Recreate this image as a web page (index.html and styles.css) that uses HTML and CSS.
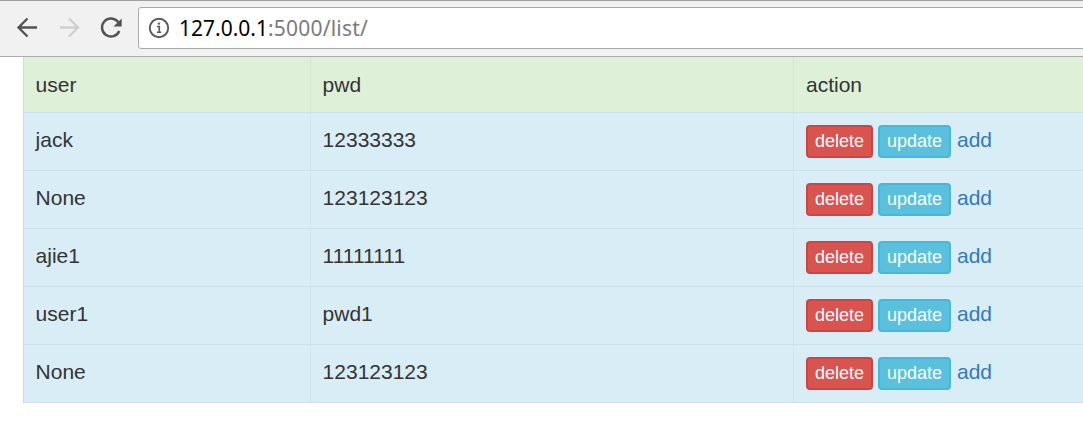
FILE: index.html
```html
<!DOCTYPE html>
<html lang="en">
<head>
<meta charset="utf-8">
<title>list</title>
<link rel="stylesheet" href="styles.css">
</head>
<body>
<header class="toolbar">
  <svg class="nav" width="138" height="54" viewBox="0 2 138 54" fill="none" stroke-width="2.3">
    <path d="M37 27.500H19M27.500 18.500L18.500 27.500L27.500 36.500" stroke="#525254"/>
    <path d="M60 27.500H77.500M69 18.500L78 27.500L69 36.500" stroke="#cfcfcf"/>
    <path d="M118.300 22.200A9 9 0 1 0 119.300 31" stroke="#525254" stroke-width="2.400"/>
    <path d="M121.700 18.500V26.500H113.500Z" fill="#525254"/>
  </svg>
  <div class="address">
    <svg class="info" width="22" height="22" viewBox="0 0 22 22" fill="none">
      <circle cx="11" cy="11" r="9.200" stroke="#58585a" stroke-width="1.900"/>
      <path d="M9 9.500H11.300V15M9 15.200H13.200" stroke="#58585a" stroke-width="1.600"/>
      <circle cx="10.900" cy="6.600" r="1.200" fill="#58585a"/>
    </svg>
    <span class="url">127.0.0.1<span class="path">:5000/list/</span></span>
  </div>
</header>
<table class="users">
  <thead>
    <tr><td class="user">user</td><td class="pwd">pwd</td><td>action</td></tr>
  </thead>
  <tbody>
    <tr><td>jack</td><td>12333333</td><td><div class="actions"><a class="btn delete">delete</a><a class="btn update">update</a><a class="add">add</a></div></td></tr>
    <tr><td>None</td><td>123123123</td><td><div class="actions"><a class="btn delete">delete</a><a class="btn update">update</a><a class="add">add</a></div></td></tr>
    <tr><td>ajie1</td><td>11111111</td><td><div class="actions"><a class="btn delete">delete</a><a class="btn update">update</a><a class="add">add</a></div></td></tr>
    <tr><td>user1</td><td>pwd1</td><td><div class="actions"><a class="btn delete">delete</a><a class="btn update">update</a><a class="add">add</a></div></td></tr>
    <tr><td>None</td><td>123123123</td><td><div class="actions"><a class="btn delete">delete</a><a class="btn update">update</a><a class="add">add</a></div></td></tr>
  </tbody>
</table>
</body>
</html>
```
FILE: styles.css
```css
* { box-sizing: border-box; }
body {
  margin: 0;
  overflow: hidden;
  background: #fff;
  color: #333;
  font: 21px/30px "Liberation Sans", Arial, sans-serif;
}
.toolbar {
  display: flex;
  height: 57px;
  border-top: 1px solid #a0a0a0;
  border-bottom: 1px solid #acacac;
  background: #f1f1f1;
}
.nav { flex: none; margin-top: 1px; }
.address {
  display: flex;
  flex: 1;
  align-items: center;
  height: 42px;
  margin: 6px -4px 0 0;
  padding-left: 9px;
  border: 1px solid #aaa;
  border-radius: 3px;
  background: #fff;
}
.info { flex: none; margin-right: 9px; }
.url {
  color: #000;
  font: 21px/30px "Noto Sans", sans-serif;
}
.path {
  color: #7b7b7b;
  letter-spacing: 0.2px;
}
.users {
  width: 1061px;
  margin-left: 23px;
  border-left: 1px solid #cbdde0;
  border-spacing: 0;
  table-layout: fixed;
}
.user { width: 287px; }
.pwd { width: 483px; }
.users td {
  height: 58px;
  padding: 12px;
  border-right: 1px solid #d0e6ea;
  border-bottom: 1px solid #cde1e8;
  background: #d9edf7;
  vertical-align: top;
}
.users td:not(:last-child) { padding-left: 11.6px; }
.users thead td {
  height: 56px;
  padding-top: 13px;
  background: #dff0d8;
  border-right-color: #d5e6d2;
}
.actions { display: flex; height: 33px; }
.btn {
  height: 33px;
  border: 2px solid;
  border-radius: 4px;
  color: #fff;
  font-size: 18px;
  line-height: 29px;
  text-align: center;
}
.delete {
  width: 67px;
  margin-right: 5px;
  background: #d9534f;
  border-color: #cc4542;
}
.update {
  width: 73px;
  margin-right: 6px;
  background: #5bc0de;
  border-color: #46b8da;
}
.add { color: #337ab7; }
```
